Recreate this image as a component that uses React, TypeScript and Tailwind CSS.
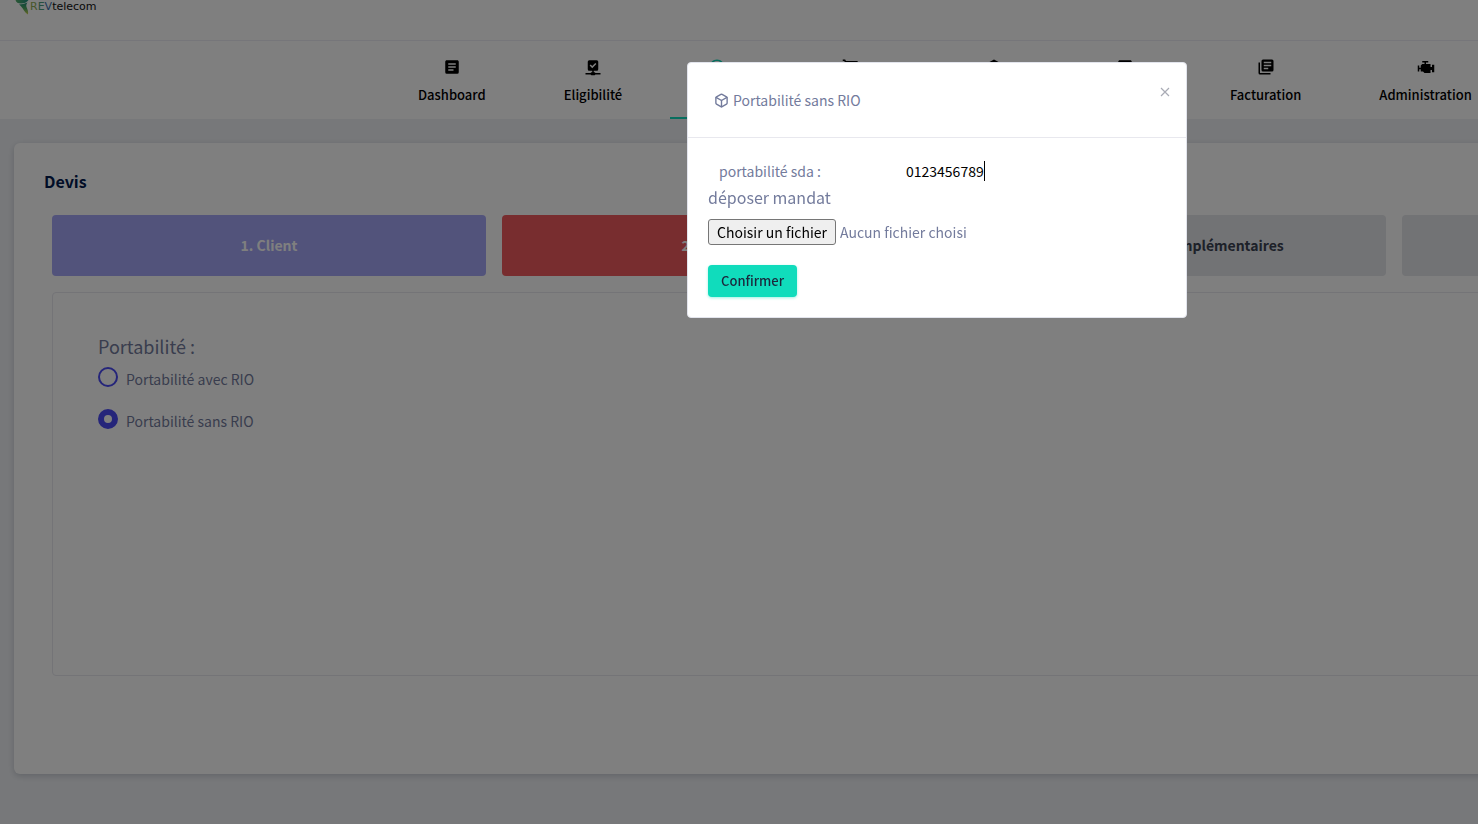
import { useState } from "react";
import { Box } from "lucide-react";
import { MdAddCircleOutline, MdShoppingCart, MdViewAgenda } from "react-icons/md";

function TextBoxIcon() {
  return (
    <svg width="18" height="18" viewBox="0 0 24 24" fill="currentColor">
      <path d="M14,17H7V15H14M17,13H7V11H17M17,9H7V7H17M19,3H5C3.89,3 3,3.89 3,5V19A2,2 0 0,0 5,21H19A2,2 0 0,0 21,19V5C21,3.89 20.1,3 19,3Z" />
    </svg>
  );
}

function CheckNetworkIcon() {
  return (
    <svg width="18" height="18" viewBox="0 0 24 24" fill="currentColor" fillRule="evenodd">
      <path d="M17,3A2,2 0 0,1 19,5V15A2,2 0 0,1 17,17H13V19H14A1,1 0 0,1 15,20H22V22H15A1,1 0 0,1 14,23H10A1,1 0 0,1 9,22H2V20H9A1,1 0 0,1 10,19H11V17H7A2,2 0 0,1 5,15V5A2,2 0 0,1 7,3H17M11,13.5L16.5,8L15.09,6.58L11,10.67L8.91,8.59L7.5,10L11,13.5Z" />
    </svg>
  );
}

function CubeIcon() {
  return (
    <svg width="18" height="18" viewBox="0 0 24 24" fill="currentColor">
      <path d="M21,16.5C21,16.88 20.79,17.21 20.47,17.38L12.57,21.82C12.41,21.94 12.21,22 12,22C11.79,22 11.59,21.94 11.43,21.82L3.53,17.38C3.21,17.21 3,16.88 3,16.5V7.5C3,7.12 3.21,6.79 3.53,6.62L11.43,2.18C11.59,2.06 11.79,2 12,2C12.21,2 12.41,2.06 12.57,2.18L20.47,6.62C20.79,6.79 21,7.12 21,7.5V16.5Z" />
    </svg>
  );
}

function TextBoxMultipleIcon() {
  return (
    <svg width="18" height="18" viewBox="0 0 24 24" fill="currentColor" fillRule="evenodd">
      <path d="M19,7H9V5H19V7M15,15H9V13H15V15M19,11H9V9H19V11M20,2H8A2,2 0 0,0 6,4V16A2,2 0 0,0 8,18H20A2,2 0 0,0 22,16V4A2,2 0 0,0 20,2M4,6H2V20A2,2 0 0,0 4,22H18V20H4V6Z" />
    </svg>
  );
}

function EngineIcon() {
  return (
    <svg width="18" height="18" viewBox="0 0 24 24" fill="currentColor">
      <path d="M7,4V6H10V8H7L5,10V13H3V10H1V18H3V15H5V18H8L10,20H18V16H20V19H23V9H20V12H18V8H12V6H15V4H7Z" />
    </svg>
  );
}

function Logo() {
  return (
    <a href="#" className="flex h-4 items-start" aria-label="REVtelecom">
      <svg width="15" height="15" viewBox="0 0 15 15">
        <defs>
          <linearGradient id="wing" x1="0" y1="0" x2="1" y2="0">
            <stop offset="0" stopColor="#57b06a" />
            <stop offset="1" stopColor="#1f8f86" />
          </linearGradient>
          <linearGradient id="tail" x1="0" y1="0" x2="0" y2="1">
            <stop offset="0" stopColor="#1f8f7a" />
            <stop offset="0.5" stopColor="#4fa865" />
            <stop offset="1" stopColor="#d0d048" />
          </linearGradient>
        </defs>
        <path d="M0.500 0C1 2.500 3 3.500 6 3.500C9 3.500 12 2.500 13.500 0Z" fill="url(#wing)" />
        <path d="M4 4.500C7 4.500 9.500 3.500 12.500 2.500C11.500 4 11 5 11.500 7C12.500 9.500 13.500 11.500 13 14.500C9 12 8.500 8 4 4.500Z" fill="url(#tail)" />
      </svg>
      <span className="font-['DejaVu_Sans'] text-[11px] leading-[13px] font-normal text-[#111]">
        <span className="text-[#8fae55]">R</span>
        <span className="text-[#4f9d80]">E</span>
        <span className="text-[#3f6fae]">V</span>
        telecom
      </span>
    </a>
  );
}

const menu = [
  { label: "Dashboard", icon: <TextBoxIcon /> },
  { label: "Eligibilité", icon: <CheckNetworkIcon /> },
  { label: "Devis", icon: <MdAddCircleOutline size={18} />, active: true },
  { label: "Commandes", icon: <MdShoppingCart size={18} /> },
  { label: "Produits", icon: <CubeIcon /> },
  { label: "Contrats", icon: <MdViewAgenda size={18} /> },
  { label: "Facturation", icon: <TextBoxMultipleIcon /> },
  { label: "Administration", icon: <EngineIcon /> },
];

const steps = [
  { label: "1. Client", style: "bg-[#a5a6f6] text-white" },
  { label: "2. Produits", style: "bg-[#f05a5e] text-white" },
  { label: "3. Informations complémentaires", style: "bg-[#e4e6ea] text-[#3b4252]" },
  { label: "4. Validation", style: "bg-[#e4e6ea] text-[#3b4252]" },
];

function Radio({ label, checked, onChange }: { label: string; checked: boolean; onChange: () => void }) {
  return (
    <label className="flex h-[42px] items-start gap-2 text-sm leading-6">
      <input
        type="radio"
        name="portabilite"
        checked={checked}
        onChange={onChange}
        className="h-5 w-5 appearance-none rounded-full border-2 border-[#4a4af4] checked:border-[6px]"
      />
      <span>{label}</span>
    </label>
  );
}

function PortabiliteModal({ onClose }: { onClose: () => void }) {
  const [sda, setSda] = useState("0123456789");

  return (
    <div className="absolute inset-0 z-50 flex items-start justify-center bg-black/50 pt-[62px]">
      <div role="dialog" aria-modal="true" aria-labelledby="modal-title" className="w-[500px] rounded border border-[#e2e4ec] bg-white">
        <div className="flex h-[75px] items-start justify-between border-b border-[#e8e8ee] pt-[25px] pr-4 pl-[26px]">
          <h5 id="modal-title" className="flex items-center gap-1 text-sm leading-6">
            <Box size={15} strokeWidth={2.2} />
            Portabilité sans RIO
          </h5>
          <button type="button" aria-label="Fermer" onClick={onClose} className="-mt-1 text-[#a9abb5]">
            <svg width="10" height="16" viewBox="0 0 10 16" stroke="currentColor" strokeWidth="1.2">
              <path d="M1 4l8 8M9 4l-8 8" />
            </svg>
          </button>
        </div>
        <form className="px-5 pt-[19px] pb-5" onSubmit={(e) => e.preventDefault()}>
          <div className="flex items-center text-sm leading-7">
            <label htmlFor="sda" className="w-[198px] pl-[11px]">portabilité sda :</label>
            <input
              id="sda"
              value={sda}
              autoFocus
              onChange={(e) => setSda(e.target.value)}
              className="field-sizing-content h-7 text-black caret-transparent outline-none"
            />
            <span className="h-5 w-px bg-black" />
          </div>
          <label htmlFor="mandat" className="block text-base leading-6">déposer mandat</label>
          <div className="mt-2.5 flex items-center gap-1 text-sm leading-6">
            <input id="mandat" type="file" className="sr-only" />
            <button
              type="button"
              onClick={() => document.getElementById("mandat")?.click()}
              className="h-[26px] rounded-[3px] border border-[#767676] bg-[#efefef] px-2 text-black"
            >
              Choisir un fichier
            </button>
            <span>Aucun fichier choisi</span>
          </div>
          <button
            type="submit"
            className="mt-5 h-8 rounded bg-[#10dcbc] px-[13px] text-[13px] font-medium text-[#1c273c] shadow-[0_1px_3px_rgba(16,220,188,0.4)]"
          >
            Confirmer
          </button>
        </form>
      </div>
    </div>
  );
}

export default function App() {
  const [open, setOpen] = useState(true);
  const [choice, setChoice] = useState("sans");

  return (
    <div className="w-full overflow-hidden font-['Noto_Sans_CJK_SC',sans-serif] text-[#737b9c]">
      <div className="relative min-h-screen min-w-[1874px] bg-[#eff1f5]">
        <header className="h-[41px] border-b border-[#ededf5] bg-white pl-[15px]">
          <Logo />
        </header>

        <nav className="flex h-[78px] gap-[18px] bg-white pl-[388px]">
          {menu.map((item) => (
            <a
              key={item.label}
              href="#"
              className={`flex flex-col items-center border-b-2 px-[30px] pt-[17px] text-[13px] leading-6 font-medium ${
                item.active ? "border-[#10dcbc] text-[#10dcbc]" : "border-transparent text-black"
              }`}
            >
              {item.icon}
              <span className="mt-[7px]">{item.label}</span>
            </a>
          ))}
        </nav>

        <main className="p-[14px] pt-6 pb-[50px]">
          <section className="rounded-md bg-white pt-[26px] pr-4 pb-[98px] pl-[30px] shadow-[0_2px_6px_rgba(28,39,60,0.2)]">
            <h2 className="text-base leading-6 font-bold text-[#031b4e]">Devis</h2>

            <div className="mt-[22px] flex gap-4 px-2">
              {steps.map((step) => (
                <button key={step.label} type="button" className={`h-[61px] flex-1 rounded pb-0.5 text-sm font-bold ${step.style}`}>
                  {step.label}
                </button>
              ))}
            </div>

            <fieldset className="mx-2 mt-4 min-h-[384px] rounded border border-[#e8e8ee] px-[45px] pt-[41px]">
              <h3 className="mb-[9px] text-lg leading-6">Portabilité :</h3>
              <Radio label="Portabilité avec RIO" checked={choice === "avec"} onChange={() => setChoice("avec")} />
              <Radio label="Portabilité sans RIO" checked={choice === "sans"} onChange={() => setChoice("sans")} />
            </fieldset>
          </section>
        </main>

        {open && <PortabiliteModal onClose={() => setOpen(false)} />}
      </div>
    </div>
  );
}
